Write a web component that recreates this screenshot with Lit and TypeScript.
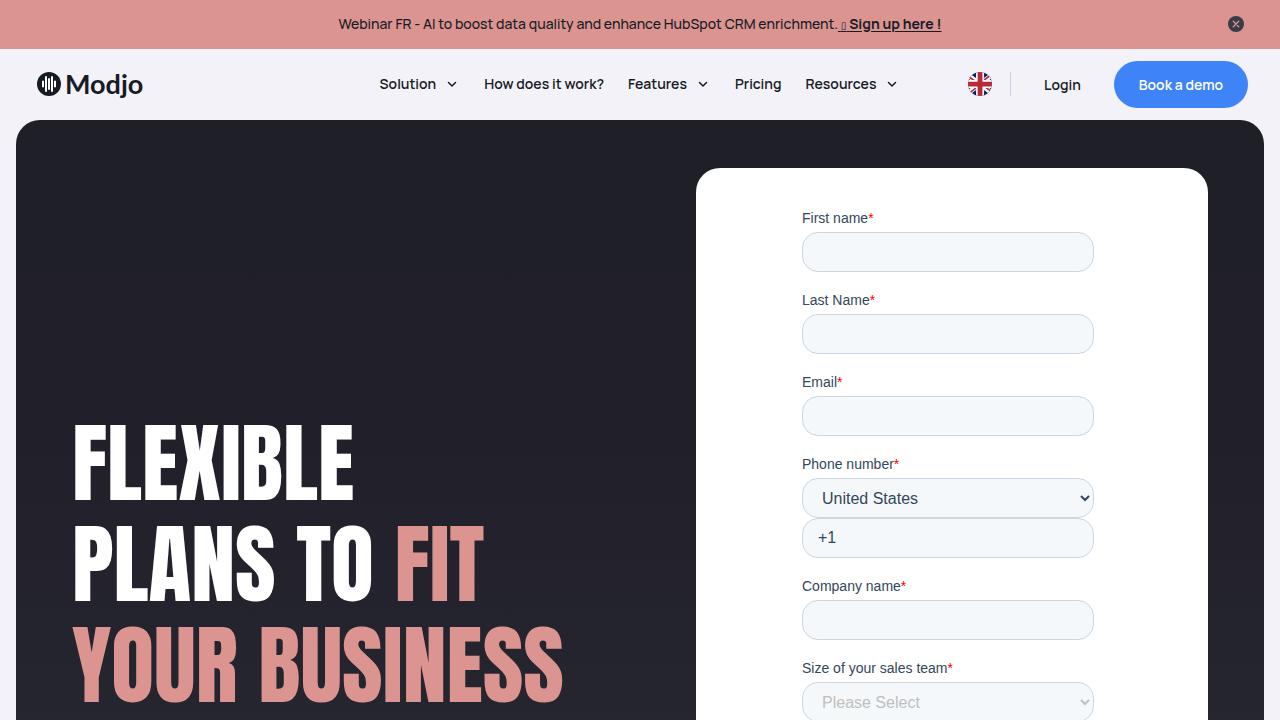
import { LitElement, html, css, svg, nothing } from "lit";
import { customElement, property } from "lit/decorators.js";

interface Field {
  id: string;
  label: string;
  kind: "text" | "phone" | "select";
}

const FIELDS: Field[] = [
  { id: "first", label: "First name", kind: "text" },
  { id: "last", label: "Last Name", kind: "text" },
  { id: "email", label: "Email", kind: "text" },
  { id: "phone", label: "Phone number", kind: "phone" },
  { id: "company", label: "Company name", kind: "text" },
  { id: "size", label: "Size of your sales team", kind: "select" },
];

const NAV = [
  { label: "Solution", menu: true },
  { label: "How does it work?", menu: false },
  { label: "Features", menu: true },
  { label: "Pricing", menu: false },
  { label: "Resources", menu: true },
];

const chevron = svg`<svg class="chevron" viewBox="0 0 16 16" width="16" height="16" fill="none" stroke="currentColor" stroke-width="1.5" stroke-linecap="round" stroke-linejoin="round" aria-hidden="true"><path d="M4.5 6.5 8 10l3.500-3.500"/></svg>`;

@customElement("promo-banner")
export class PromoBanner extends LitElement {
  static styles = css`
    :host {
      display: grid;
      grid-template-columns: 16px 1fr 16px;
      align-items: center;
      padding: 12px 36px 13px;
      background: #db9490;
      color: #171b26;
      font: 500 14px/24px Manrope, "Inter", sans-serif;
    }
    .text {
      grid-column: 2;
      margin: 0;
      text-align: center;
    }
    .link {
      color: inherit;
      text-underline-offset: 2px;
    }
    .mark {
      font: 400 10px/12px "DejaVu Sans", sans-serif;
    }
    .strong {
      font-weight: 700;
    }
    .close {
      display: flex;
      justify-self: end;
      padding: 0;
      border: 0;
      background: none;
      cursor: pointer;
    }
  `;
  render() {
    return html`
      <p class="text">Webinar FR - AI to boost data quality and enhance HubSpot CRM enrichment.<a class="link" href="#webinar"> <span class="mark">▯</span> <span class="strong">Sign up here !</span></a></p>
      <button class="close" aria-label="Close">
        <svg width="16" height="16" viewBox="0 0 16 16" aria-hidden="true">
          <circle cx="8" cy="8" r="8" fill="#3a3b46" />
          <path d="m5.300 5.300 5.400 5.400m0-5.400-5.400 5.400" stroke="#db9490" stroke-width="1.300" stroke-linecap="round" />
        </svg>
      </button>
    `;
  }
}

@customElement("site-header")
export class SiteHeader extends LitElement {
  static styles = css`
    :host {
      display: grid;
      grid-template-columns: 1fr auto 1fr;
      align-items: center;
      padding: 12px 32px;
      color: #171b26;
      font: 600 14px/20px Manrope, "Inter", sans-serif;
    }
    a {
      color: inherit;
      text-decoration: none;
      white-space: nowrap;
    }
    .logo {
      display: flex;
      align-items: center;
      justify-self: start;
      gap: 4px;
      padding: 0 0 1px 5px;
      font: 700 27px/28px Lato, sans-serif;
    }
    .nav {
      display: flex;
      gap: 24px;
      padding-bottom: 1px;
    }
    .item {
      display: flex;
      align-items: center;
      gap: 8px;
      padding: 0;
      border: 0;
      background: none;
      color: inherit;
      font: inherit;
      white-space: nowrap;
    }
    .actions {
      display: flex;
      align-items: center;
      justify-self: end;
    }
    .lang {
      display: flex;
      margin-bottom: 1px;
      padding: 0 18px 0 0;
      border: 0;
      border-right: 1px solid #cfcde2;
      background: none;
    }
    .login {
      padding: 0 33px;
    }
    .demo {
      padding: 14px 25px 13px;
      border-radius: 24px;
      background: #3f83f9;
      color: #fff;
    }
  `;
  render() {
    return html`
      <a class="logo" href="#home">
        <svg width="24" height="24" viewBox="0 0 24 24" aria-hidden="true">
          <circle cx="12" cy="12" r="12" fill="#171b26" />
          <path d="M6 9.500v5M9 5v14M12 7v10M15 5v14M18 9.500v5" stroke="#fff" stroke-width="2" stroke-linecap="round" />
        </svg>
        <span>Modjo</span>
      </a>
      <nav class="nav">
        ${NAV.map((n) =>
          n.menu
            ? html`<button class="item">${n.label}${chevron}</button>`
            : html`<a class="item" href="#page">${n.label}</a>`
        )}
      </nav>
      <div class="actions">
        <button class="lang" aria-label="English">
          <svg width="24" height="24" viewBox="80 0 480 480" aria-hidden="true">
            <clipPath id="round"><circle cx="320" cy="240" r="240" /></clipPath>
            <g clip-path="url(#round)">
              <path fill="#012169" d="M0 0h640v480H0z" />
              <path fill="#fff" d="m75 0 244 181L562 0h78v62L400 241l240 178v61h-80L320 301 81 480H0v-60l239-178L0 64V0z" />
              <path fill="#b92a38" d="m424 281 216 159v40L369 281zm-184 20 6 35L54 480H0zM640 0v3L391 191l2-44L590 0zM0 0l239 176h-60L0 42z" />
              <path fill="#fff" d="M241 0v480h160V0zM0 160v160h640V160z" />
              <path fill="#b92a38" d="M0 193v96h640v-96zM273 0v480h96V0z" />
            </g>
          </svg>
        </button>
        <a class="login" href="#login">Login</a>
        <a class="demo" href="#demo">Book a demo</a>
      </div>
    `;
  }
}

@customElement("demo-form")
export class DemoForm extends LitElement {
  @property({ attribute: false }) fields: Field[] = [];
  static styles = css`
    :host {
      display: block;
      box-sizing: border-box;
      min-height: 790px;
      padding: 40px;
      border-radius: 24px;
      background: #fff;
      color: #33475b;
      font: 14px/20px "Liberation Sans", Arial, sans-serif;
    }
    .form {
      display: grid;
      gap: 18px;
      box-sizing: border-box;
      max-width: 300px;
      margin: 0 auto;
      padding-right: 8px;
    }
    .field {
      display: flex;
      flex-direction: column;
    }
    .label {
      margin-bottom: 4px;
    }
    .required {
      color: #f00;
    }
    .control {
      box-sizing: border-box;
      width: 100%;
      height: 40px;
      padding: 8px 15px;
      border: 1px solid #cbd6e2;
      border-radius: 16px;
      background-color: #f5f8fa;
      color: #33475b;
      font: 16px/22px "Liberation Sans", Arial, sans-serif;
    }
    select.control {
      padding-right: 0;
    }
    select.empty {
      color: #bfbfbf;
    }
  `;
  private control(f: Field) {
    if (f.kind === "text") return html`<input class="control" id=${f.id} />`;
    if (f.kind === "select")
      return html`<select class="control empty" id=${f.id}><option>Please Select</option></select>`;
    return html`
      <select class="control" aria-label="Country"><option>United States</option></select>
      <input class="control" id=${f.id} type="tel" .value=${"+1"} />
    `;
  }
  render() {
    return this.fields.length
      ? html`<form class="form">
          ${this.fields.map(
            (f) => html`<div class="field">
              <label class="label" for=${f.id}>${f.label}<span class="required">*</span></label>
              ${this.control(f)}
            </div>`
          )}
        </form>`
      : nothing;
  }
}

@customElement("app-root")
export class AppRoot extends LitElement {
  static styles = css`
    :host {
      display: block;
      min-height: 100vh;
      background: #f3f2f8;
    }
    .hero {
      display: grid;
      grid-template-columns: minmax(0, 1fr) minmax(0, 512px);
      gap: 80px;
      align-items: center;
      margin: 0 16px;
      padding: 48px 56px;
      border-radius: 24px;
      background: linear-gradient(#1f1f28, #21202a 35%, #262630 70%);
    }
    .title {
      margin: 0;
      color: #fff;
      font: 400 88px/101px Anton, Impact, sans-serif;
      text-transform: uppercase;
    }
    .line {
      display: block;
      white-space: nowrap;
    }
    .accent {
      color: #db9490;
    }
  `;
  render() {
    return html`
      <promo-banner></promo-banner>
      <site-header></site-header>
      <main class="hero">
        <h1 class="title">
          <span class="line">Flexible</span>
          <span class="line">plans to <span class="accent">fit</span></span>
          <span class="line accent">your business</span>
        </h1>
        <demo-form .fields=${FIELDS}></demo-form>
      </main>
    `;
  }
}
